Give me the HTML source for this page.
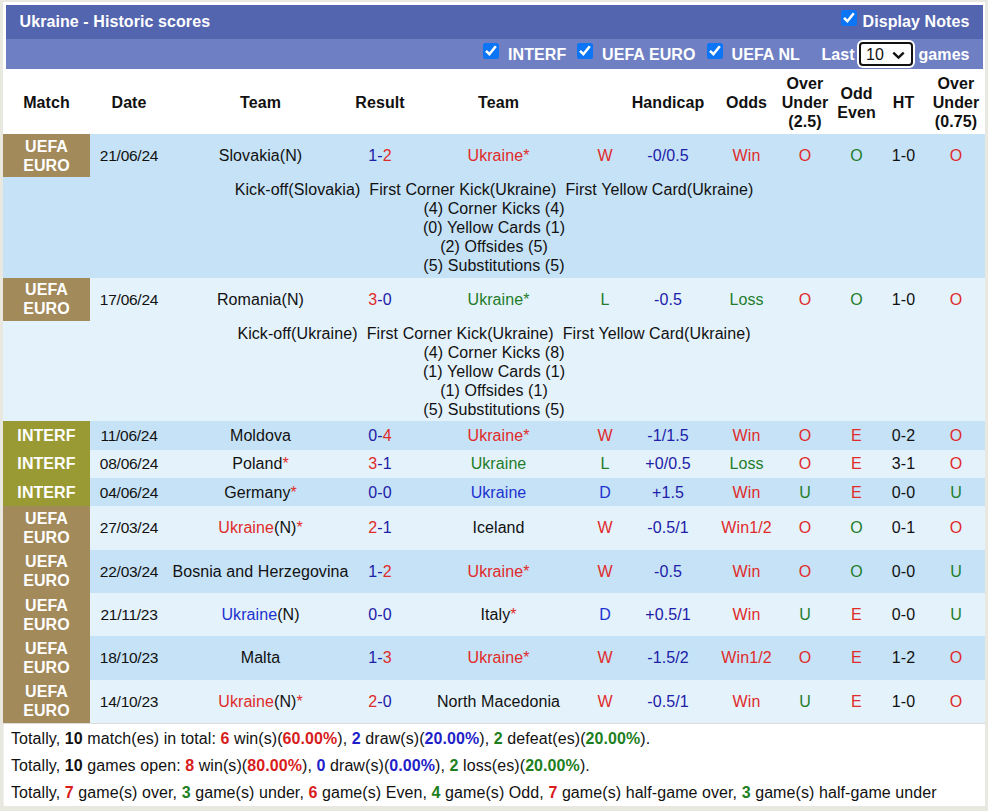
<!DOCTYPE html>
<html><head><meta charset="utf-8">
<style>
*{box-sizing:border-box;}
html,body{margin:0;padding:0;}
body{width:988px;height:811px;background:#e8e8e0;font-family:"Liberation Sans",sans-serif;font-size:16px;color:#111;position:relative;overflow:hidden;letter-spacing:0.08px;}
#wrap{position:absolute;left:3px;top:2px;width:982px;height:804px;background:#fff;}
#bar1{position:absolute;left:6px;top:5px;width:977px;height:34px;background:#5465b0;color:#fff;font-weight:bold;}
#bar2{position:absolute;left:6px;top:39px;width:977px;height:30px;background:#6e80c3;color:#fff;font-weight:bold;}
.t{position:absolute;white-space:nowrap;line-height:19px;}
.cb{position:absolute;width:16px;height:16px;border-radius:2.5px;background:#0b75f5;}
.cb svg{position:absolute;left:0;top:0;}
#sel{position:absolute;left:859px;top:42px;width:54px;height:24px;border:2px solid #111;border-radius:4px;background:#fff;box-shadow:0 0 0 2px #fff;}
table{position:absolute;left:3px;top:69px;width:982px;border-collapse:collapse;table-layout:fixed;}
td,th{padding:0;text-align:center;line-height:19px;font-size:16px;white-space:nowrap;}
th{font-weight:bold;color:#111;height:65px;padding-top:2px;}
td.m{color:#fff;font-weight:bold;}
.eu{background:#a38a5b;}
.it{background:#9a9a34;}
tr.d td{background:#c6e2f6;}
tr.l td{background:#e4f2fb;}
tr.d td.eu,tr.l td.eu{background:#a38a5b;}
tr.d td.it,tr.l td.it{background:#9a9a34;}
.r{color:#e02b2b;}
.b{color:#2020a8;}
.g{color:#1f7d2c;}
.bb{color:#1d33d0;}
.k{color:#111;}
td.dt{font-size:15.5px;letter-spacing:-0.25px;}
.notes{text-align:center;}
#sum{position:absolute;left:3px;top:723px;width:982px;height:83px;border-top:1px solid #dcdcdc;border-left:1px solid #f0f0ea;}
#sum div{position:absolute;left:7px;white-space:nowrap;line-height:19px;}
#sum b.r{color:#d81c1c;}
#sum b.bl{color:#1f1fc8;}
#sum b.g{color:#1e7f1e;}
</style></head>
<body>
<div id="wrap"></div>
<div id="bar1">
  <div class="t" style="left:13.6px;top:7px;">Ukraine - Historic scores</div>
  <div class="cb" style="left:835px;top:5px;"><svg width="16" height="16" viewBox="0 0 16 16"><path d="M3 7.9 L6.4 11.2 L12.8 3.3" stroke="#fff" stroke-width="2.6" fill="none"/></svg></div>
  <div class="t" style="left:856.6px;top:7px;">Display Notes</div>
</div>
<div id="bar2">
  <div class="cb" style="left:477px;top:4px;"><svg width="16" height="16" viewBox="0 0 16 16"><path d="M3 7.9 L6.4 11.2 L12.8 3.3" stroke="#fff" stroke-width="2.6" fill="none"/></svg></div>
  <div class="t" style="left:502px;top:6px;">INTERF</div>
  <div class="cb" style="left:571px;top:4px;"><svg width="16" height="16" viewBox="0 0 16 16"><path d="M3 7.9 L6.4 11.2 L12.8 3.3" stroke="#fff" stroke-width="2.6" fill="none"/></svg></div>
  <div class="t" style="left:596px;top:6px;">UEFA EURO</div>
  <div class="cb" style="left:701px;top:4px;"><svg width="16" height="16" viewBox="0 0 16 16"><path d="M3 7.9 L6.4 11.2 L12.8 3.3" stroke="#fff" stroke-width="2.6" fill="none"/></svg></div>
  <div class="t" style="left:725.5px;top:6px;">UEFA NL</div>
  <div class="t" style="left:815.5px;top:6px;">Last</div>
  <div class="t" style="left:912.5px;top:6px;">games</div>
</div>
<div id="sel">
  <div class="t" style="left:5px;top:1px;color:#111;font-weight:normal;font-size:16px;letter-spacing:0;">10</div>
  <svg style="position:absolute;left:31px;top:6.5px;" width="13" height="9" viewBox="0 0 13 9"><path d="M1.3 1.6 L6.5 6.6 L11.7 1.6" stroke="#111" stroke-width="2.4" fill="none"/></svg>
</div>

<table>
<colgroup>
<col style="width:87px"><col style="width:78px"><col style="width:185px"><col style="width:54px"><col style="width:183px"><col style="width:30px"><col style="width:96px"><col style="width:61px"><col style="width:56px"><col style="width:47px"><col style="width:47px"><col style="width:58px">
</colgroup>
<tr><th>Match</th><th>Date</th><th>Team</th><th>Result</th><th>Team</th><th></th><th>Handicap</th><th>Odds</th><th>Over<br>Under<br>(2.5)</th><th>Odd<br>Even</th><th>HT</th><th>Over<br>Under<br>(0.75)</th></tr>

<tr class="d" style="height:43.3px"><td class="m eu">UEFA<br>EURO</td><td class="dt">21/06/24</td><td>Slovakia(N)</td><td class="b">1-<span class="r">2</span></td><td class="r">Ukraine*</td><td class="r">W</td><td class="b">-0/0.5</td><td class="r">Win</td><td class="r">O</td><td class="g">O</td><td>1-0</td><td class="r">O</td></tr>
<tr class="d" style="height:100.5px"><td colspan="12" class="notes">Kick-off(Slovakia)&nbsp;&nbsp;First Corner Kick(Ukraine)&nbsp;&nbsp;First Yellow Card(Ukraine)<br>(4) Corner Kicks (4)<br>(0) Yellow Cards (1)<br>(2) Offsides (5)<br>(5) Substitutions (5)</td></tr>

<tr class="l" style="height:43.3px"><td class="m eu">UEFA<br>EURO</td><td class="dt">17/06/24</td><td>Romania(N)</td><td class="b"><span class="r">3</span>-0</td><td class="g">Ukraine*</td><td class="g">L</td><td class="b">-0.5</td><td class="g">Loss</td><td class="r">O</td><td class="g">O</td><td>1-0</td><td class="r">O</td></tr>
<tr class="l" style="height:100px"><td colspan="12" class="notes">Kick-off(Ukraine)&nbsp;&nbsp;First Corner Kick(Ukraine)&nbsp;&nbsp;First Yellow Card(Ukraine)<br>(4) Corner Kicks (8)<br>(1) Yellow Cards (1)<br>(1) Offsides (1)<br>(5) Substitutions (5)</td></tr>

<tr class="d" style="height:28.6px"><td class="m it">INTERF</td><td class="dt">11/06/24</td><td>Moldova</td><td class="b">0-<span class="r">4</span></td><td class="r">Ukraine*</td><td class="r">W</td><td class="b">-1/1.5</td><td class="r">Win</td><td class="r">O</td><td class="r">E</td><td>0-2</td><td class="r">O</td></tr>
<tr class="l" style="height:28.3px"><td class="m it">INTERF</td><td class="dt">08/06/24</td><td>Poland<span class="r">*</span></td><td class="b"><span class="r">3</span>-1</td><td class="g">Ukraine</td><td class="g">L</td><td class="b">+0/0.5</td><td class="g">Loss</td><td class="r">O</td><td class="r">E</td><td>3-1</td><td class="r">O</td></tr>
<tr class="d" style="height:28.2px"><td class="m it">INTERF</td><td class="dt">04/06/24</td><td>Germany<span class="r">*</span></td><td class="b">0-0</td><td class="bb">Ukraine</td><td class="bb">D</td><td class="b">+1.5</td><td class="r">Win</td><td class="g">U</td><td class="r">E</td><td>0-0</td><td class="g">U</td></tr>

<tr class="l" style="height:43.4px"><td class="m eu">UEFA<br>EURO</td><td class="dt">27/03/24</td><td><span class="r">Ukraine</span>(N)<span class="r">*</span></td><td class="b"><span class="r">2</span>-1</td><td>Iceland</td><td class="r">W</td><td class="b">-0.5/1</td><td class="r">Win1/2</td><td class="r">O</td><td class="g">O</td><td>0-1</td><td class="r">O</td></tr>
<tr class="d" style="height:43.4px"><td class="m eu">UEFA<br>EURO</td><td class="dt">22/03/24</td><td>Bosnia and Herzegovina</td><td class="b">1-<span class="r">2</span></td><td class="r">Ukraine*</td><td class="r">W</td><td class="b">-0.5</td><td class="r">Win</td><td class="r">O</td><td class="g">O</td><td>0-0</td><td class="g">U</td></tr>
<tr class="l" style="height:43.4px"><td class="m eu">UEFA<br>EURO</td><td class="dt">21/11/23</td><td><span class="bb">Ukraine</span>(N)</td><td class="b">0-0</td><td>Italy<span class="r">*</span></td><td class="bb">D</td><td class="b">+0.5/1</td><td class="r">Win</td><td class="g">U</td><td class="r">E</td><td>0-0</td><td class="g">U</td></tr>
<tr class="d" style="height:43.3px"><td class="m eu">UEFA<br>EURO</td><td class="dt">18/10/23</td><td>Malta</td><td class="b">1-<span class="r">3</span></td><td class="r">Ukraine*</td><td class="r">W</td><td class="b">-1.5/2</td><td class="r">Win1/2</td><td class="r">O</td><td class="r">E</td><td>1-2</td><td class="r">O</td></tr>
<tr class="l" style="height:43.4px"><td class="m eu">UEFA<br>EURO</td><td class="dt">14/10/23</td><td><span class="r">Ukraine</span>(N)<span class="r">*</span></td><td class="b"><span class="r">2</span>-0</td><td>North Macedonia</td><td class="r">W</td><td class="b">-0.5/1</td><td class="r">Win</td><td class="g">U</td><td class="r">E</td><td>1-0</td><td class="r">O</td></tr>
</table>

<div id="sum">
  <div style="top:5px;">Totally, <b>10</b> match(es) in total: <b class="r">6</b> win(s)(<b class="r">60.00%</b>), <b class="bl">2</b> draw(s)(<b class="bl">20.00%</b>), <b class="g">2</b> defeat(es)(<b class="g">20.00%</b>).</div>
  <div style="top:32px;">Totally, <b>10</b> games open: <b class="r">8</b> win(s)(<b class="r">80.00%</b>), <b class="bl">0</b> draw(s)(<b class="bl">0.00%</b>), <b class="g">2</b> loss(es)(<b class="g">20.00%</b>).</div>
  <div style="top:59px;">Totally, <b class="r">7</b> game(s) over, <b class="g">3</b> game(s) under, <b class="r">6</b> game(s) Even, <b class="g">4</b> game(s) Odd, <b class="r">7</b> game(s) half-game over, <b class="g">3</b> game(s) half-game under</div>
</div>
</body></html>
